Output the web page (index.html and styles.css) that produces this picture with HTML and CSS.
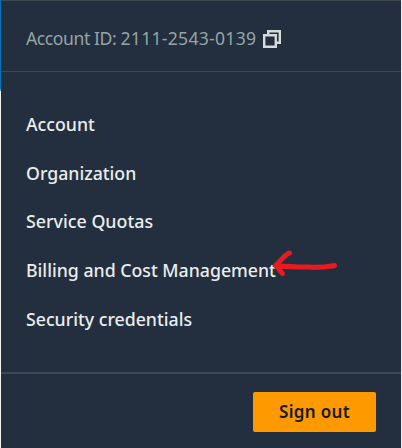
FILE: index.html
```html
<!DOCTYPE html>
<html lang="en">
<head>
<meta charset="utf-8">
<title>Account menu</title>
<link rel="stylesheet" href="styles.css">
</head>
<body>
<div class="page">
  <section class="panel">
    <header class="account">
      <span class="account-id"><span class="account-label">Account ID: </span><span class="account-number">2111-2543-0139</span></span>
      <svg class="copy" width="18" height="18" viewBox="0 0 18 18"><path d="M5.200 4V1.200H16.800V12.800H14M1.200 5.200H12.800V16.800H1.200Z"/></svg>
    </header>
    <nav class="menu">
      <a class="item account-link">Account</a>
      <a class="item organization">Organization</a>
      <a class="item quotas">Service Quotas</a>
      <a class="item billing">Billing and Cost Management</a>
      <a class="item security">Security credentials</a>
    </nav>
    <footer class="footer"><button class="sign-out"><span class="sign-out-text">Sign out</span></button></footer>
  </section>
  <svg class="arrow" width="85" height="45" viewBox="262 242 85 45"><path d="M289.500 253C285 254 281 261 275.500 265.500C278 268 280.500 271 282.500 273.500M276.500 265.500C287 267 298 267 309 267C321 268 325 267 334.500 265.500"/></svg>
</div>
</body>
</html>
```
FILE: styles.css
```css
* { box-sizing: border-box; }
body { margin: 0; }
.page {
  position: relative;
  width: 402px;
  height: 448px;
  padding: 0 1px;
  overflow: hidden;
  background: linear-gradient(#0073bb 0 89px, #8b9193 89px 91px, #f2f3f3 91px) left / 1px 100% no-repeat, #eaeded;
  font-family: "Noto Sans", sans-serif;
}
.panel {
  display: flex;
  flex-direction: column;
  height: 448px;
  background: #232f3e;
  border-top: 1px solid #414750;
}
.account {
  display: flex;
  height: 71px;
  padding: 0 25px;
  align-items: flex-start;
  border-bottom: 1px solid #414750;
  color: #95a5a6;
}
.account-id {
  width: 237px;
  margin-top: 24px;
  font-size: 18px;
  line-height: 26px;
  white-space: nowrap;
  transform: scaleX(.977);
  transform-origin: left;
}
.account-label { letter-spacing: -.43px; }
.account-number { letter-spacing: .28px; }
.copy { margin-top: 29px; flex: none; }
.copy path { fill: none; stroke: #d5dbdb; stroke-width: 2.400; }
.menu {
  display: flex;
  flex-direction: column;
  align-items: flex-start;
  height: 300px;
  padding: 28px 25px 0;
}
.item {
  height: 48.750px;
  color: #eaeded;
  font-size: 18px;
  font-weight: 500;
  line-height: 48px;
  white-space: nowrap;
  transform: scaleX(.984);
  transform-origin: left;
}
.quotas { transform: translateY(-1px) scaleX(.99); }
.footer {
  display: flex;
  height: 76px;
  padding: 18px 25px 0;
  justify-content: flex-end;
  border-top: 2px solid #414750;
}
.sign-out {
  width: 123px;
  height: 40px;
  padding: 0;
  border: 0;
  border-radius: 2px;
  background: #ff9900;
  color: #16191f;
  font: 600 17px/38px "Noto Sans", sans-serif;
}
.sign-out-text { display: inline-block; letter-spacing: .35px; }
.arrow { position: absolute; left: 262px; top: 242px; }
.arrow path { fill: none; stroke: #e81c20; stroke-width: 5; stroke-linecap: round; stroke-linejoin: round; }
```
